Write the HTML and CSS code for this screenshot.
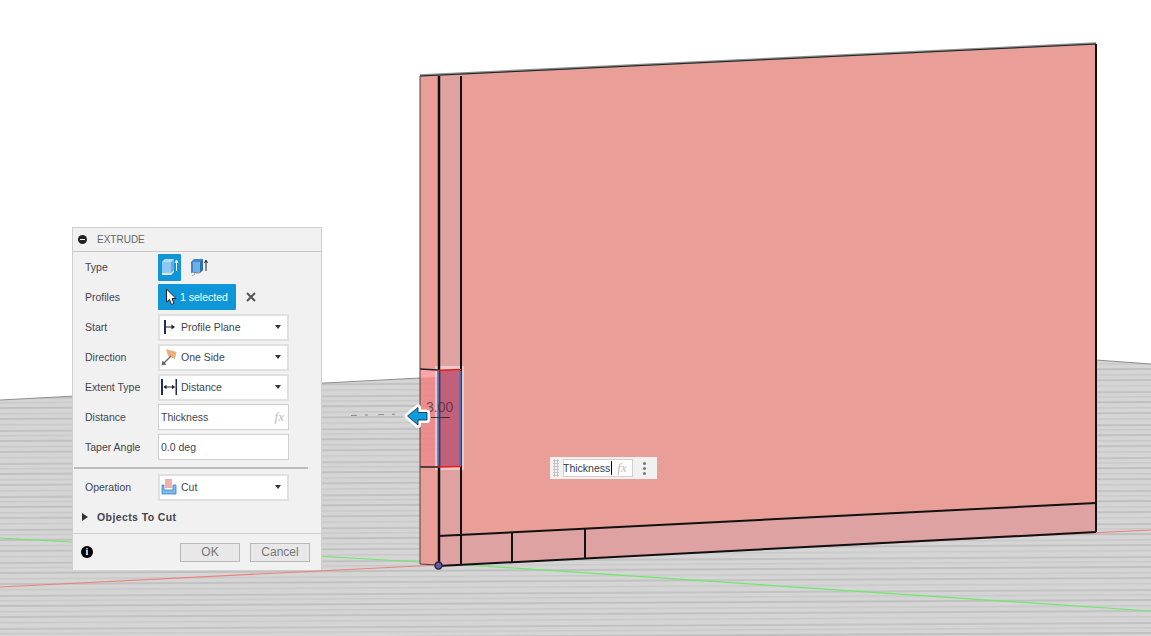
FILE: index.html
```html
<!DOCTYPE html>
<html lang="en">
<head>
<meta charset="utf-8">
<title>Extrude</title>
<link rel="stylesheet" href="styles.css">
</head>
<body>
<main class="stage">
  <svg class="scene" width="1151" height="636" viewBox="0 0 1151 636">
    <defs>
      <pattern id="stripes" width="600" height="33" patternUnits="userSpaceOnUse" patternTransform="rotate(-0.3)">
        <rect width="600" height="33" fill="#d5d5d5"/>
        <rect y="1" width="600" height="2" fill="#c3c3c3"/>
        <rect y="6" width="600" height="1.500" fill="#c9c9c9"/>
        <rect y="11" width="600" height="2" fill="#c0c0c0"/>
        <rect y="17" width="600" height="1.500" fill="#c8c8c8"/>
        <rect y="22" width="600" height="2" fill="#c2c2c2"/>
        <rect y="28" width="600" height="1.500" fill="#c9c9c9"/>
      </pattern>
      <filter id="soft" x="-1%" y="-1%" width="102%" height="102%">
        <feGaussianBlur stdDeviation="0.6"/>
      </filter>
    </defs>
    <polygon points="0,400 420,378 760,352 1096,360 1151,364 1151,640 -5,640 -5,400" fill="url(#stripes)" filter="url(#soft)"/>
    <polyline points="0,400 420,378" class="horizon"/>
    <polyline points="1096,360 1151,364" class="horizon"/>
    <polyline points="0,538 438,563 1151,611" class="axis-green"/>
    <polyline points="0,587 438,565 1151,530" class="axis-red"/>

    <polygon points="420,76 1096,44 1096,532 438,566 420,564" fill="#e99f98"/>
    <polygon points="439,77 461,76 461,564 439,566" fill="#dfa2a1"/>
    <polygon points="438,536 1096,503 1096,532 438,566" fill="#dea2a3"/>

    <polygon points="420,369 438,369 438,467 420,467" fill="#f08484"/>
    <polygon points="420,378 438,377 438,467 420,467" fill="url(#stripes)" opacity="0.12"/>
    <polygon points="420,369 438,369 438,377 420,378" fill="#fba6a6"/>
    <rect x="436.500" y="367.500" width="26" height="101" class="halo"/>
    <rect x="439" y="370" width="22" height="97" fill="#c0607a"/>
    <line x1="420" y1="369" x2="438" y2="370" class="edge-thin"/>
    <line x1="420" y1="467" x2="438" y2="467" class="edge-thin"/>

    <polyline points="420,76 1096,44" class="top-shade"/>
    <polyline points="420,76 1096,44" class="edge-top"/>
    <line x1="420" y1="76" x2="420" y2="564" class="edge-side"/>
    <line x1="420" y1="564" x2="438" y2="565" class="edge-side"/>
    <line x1="439" y1="76" x2="439" y2="566" class="edge-bold"/>
    <line x1="461" y1="76" x2="461" y2="564" class="edge"/>
    <line x1="1096" y1="44" x2="1096" y2="532" class="edge"/>
    <line x1="438" y1="536" x2="1096" y2="503" class="edge"/>
    <line x1="438" y1="566" x2="1096" y2="532" class="edge"/>
    <line x1="512" y1="532" x2="512" y2="562" class="edge"/>
    <line x1="585" y1="529" x2="585" y2="558" class="edge"/>

    <line x1="438.500" y1="371" x2="438.500" y2="466" class="sel-blue"/>
    <line x1="460.500" y1="371" x2="460.500" y2="466" class="sel-blue"/>
    <line x1="437" y1="370.500" x2="461" y2="369.500" class="sel-red"/>
    <line x1="438" y1="467" x2="461" y2="466.500" class="sel-red"/>

    <text x="426" y="412" class="dim-text">3.00</text>
    <line x1="431" y1="417.500" x2="450" y2="417.500" class="dim-line"/>
    <line x1="351" y1="415.500" x2="404" y2="414" class="dim-dash"/>

    <g>
      <path d="M407.500 416 L418 407.500 L418 412.500 L427 412.500 L427 420 L418 420 L418 425 Z" class="arrow-halo"/>
      <path d="M407.500 416 L418 407.500 L418 412.500 L427 412.500 L427 420 L418 420 L418 425 Z" class="arrow"/>
    </g>

    <circle cx="438.500" cy="565.500" r="3.500" class="origin"/>
  </svg>

  <section class="dialog">
    <header class="dialog-head">
      <span class="collapse"></span>
      <span class="dialog-title">EXTRUDE</span>
    </header>
    <div class="rows">
      <div class="row">
        <span class="label">Type</span>
        <div class="types">
          <span class="type-btn active">
            <svg width="20" height="20" viewBox="0 0 20 20">
              <path d="M2 5 L5 2 L14 2 L14 13 L11 16 L2 16 Z" fill="#8cc8f5"/>
              <path d="M11 5 L14 2 L14 13 L11 16 Z" fill="#6aa9dd"/>
              <path d="M2 5 L5 2 L14 2 L11 5 Z" fill="#b4defa"/>
              <path d="M2 16 L11 16 L14 13 L14 15 L11 18 L2 18 Z" fill="#e6e6e6"/>
              <path d="M16.500 14 L16.500 4 M15 6 L16.500 3 L18 6" stroke="#fff" stroke-width="1" fill="none"/>
            </svg>
          </span>
          <span class="type-btn">
            <svg width="20" height="20" viewBox="0 0 20 20">
              <path d="M2 5 L5 2 L14 2 L14 13 L11 16 L2 16 Z" fill="#3f86c9"/>
              <path d="M4 5 L11 5 L11 15 L4 15 Z" fill="#6fb0e6"/>
              <path d="M11 5 L14 2 L14 13 L11 16 Z" fill="#2f6fae"/>
              <path d="M2 16 Q5 14 6 17 L3 19 M7 16 L11 16 L13 14" stroke="#aaa" fill="none"/>
              <path d="M17 14 L17 4 M15.500 6 L17 3 L18.500 6" stroke="#222" stroke-width="1" fill="none"/>
            </svg>
          </span>
        </div>
      </div>
      <div class="row">
        <span class="label">Profiles</span>
        <span class="selected-btn">
          <svg width="12" height="18" viewBox="0 0 12 18">
            <path d="M1.500 1 L1.500 14 L4.500 11.500 L6.500 16.500 L9 15.500 L7 10.500 L11 10.500 Z" fill="#fff" stroke="#222" stroke-width="1"/>
          </svg>
          <span>1 selected</span>
        </span>
        <svg class="clear" width="10" height="10" viewBox="0 0 10 10">
          <path d="M1 1 L9 9 M9 1 L1 9" stroke="#555" stroke-width="2"/>
        </svg>
      </div>
      <div class="row">
        <span class="label">Start</span>
        <div class="select">
          <svg class="opt-icon" width="16" height="16" viewBox="0 0 16 16">
            <path d="M4 1 L4 15" stroke="#152f60" stroke-width="2"/>
            <path d="M4 8 L13 8" stroke="#222" stroke-width="1"/>
            <path d="M10.500 5.500 L14 8 L10.500 10.500 Z" fill="#222"/>
          </svg>
          <span class="opt-text">Profile Plane</span>
          <span class="caret"></span>
        </div>
      </div>
      <div class="row">
        <span class="label">Direction</span>
        <div class="select">
          <svg class="opt-icon" width="16" height="18" viewBox="0 0 16 18">
            <path d="M5 1 L15.500 4 L14 11 L7 8 Z" fill="#f0ad7c"/>
            <path d="M10 8 L2 16" stroke="#666" stroke-width="1.300"/>
            <path d="M0.500 17.500 L1.500 12.500 L5.500 16.500 Z" fill="#666"/>
          </svg>
          <span class="opt-text">One Side</span>
          <span class="caret"></span>
        </div>
      </div>
      <div class="row">
        <span class="label">Extent Type</span>
        <div class="select">
          <svg class="opt-icon" width="16" height="16" viewBox="0 0 16 16">
            <path d="M1 0 L1 16 M15.500 0 L15.500 16" stroke="#152f60" stroke-width="2"/>
            <path d="M3 8 L13.500 8" stroke="#222" stroke-width="1"/>
            <path d="M2.500 8 L5.500 5.800 L5.500 10.200 Z M14 8 L11 5.800 L11 10.200 Z" fill="#222"/>
          </svg>
          <span class="opt-text">Distance</span>
          <span class="caret"></span>
        </div>
      </div>
      <div class="row">
        <span class="label">Distance</span>
        <div class="field">
          <span>Thickness</span>
          <em class="fx">fx</em>
        </div>
      </div>
      <div class="row">
        <span class="label">Taper Angle</span>
        <div class="field">
          <span>0.0 deg</span>
        </div>
      </div>
    </div>
    <hr class="rule">
    <div class="row">
      <span class="label">Operation</span>
      <div class="select">
        <svg class="opt-icon" width="16" height="16" viewBox="0 0 16 16">
          <rect x="4" y="0" width="7" height="9" fill="#eeb1ae"/>
          <path d="M1 6 L1 15 L15 15 L15 6 L12 6 L12 11 L3 11 L3 6 Z" fill="#7fb9e8" stroke="#3d83c4" stroke-width="0.800"/>
        </svg>
        <span class="opt-text">Cut</span>
        <span class="caret"></span>
      </div>
    </div>
    <div class="group">
      <span class="expand"></span>
      <span class="group-title">Objects To Cut</span>
    </div>
    <footer class="dialog-foot">
      <span class="info">i</span>
      <span class="btn">OK</span>
      <span class="btn">Cancel</span>
    </footer>
  </section>

  <div class="inline-input">
    <span class="grip"></span>
    <div class="inline-field">
      <span class="inline-text">Thickness</span>
      <span class="text-caret"></span>
      <em class="fx">fx</em>
    </div>
    <span class="kebab"><i></i><i></i><i></i></span>
  </div>
</main>
</body>
</html>
```
FILE: styles.css
```css
* {
  box-sizing: border-box;
}

html,
body {
  margin: 0;
  background: #fff;
}

.stage {
  position: relative;
  width: 1151px;
  height: 636px;
  overflow: hidden;
  font: 10.5px/14px "Liberation Sans", Arial, sans-serif;
  color: #40454f;
}

.scene {
  position: absolute;
  inset: 0;
  display: block;
}

.horizon { fill: none; stroke: #8f8f8f; stroke-width: 1; }
.axis-green { fill: none; stroke: #6fe86f; stroke-width: 1.2; }
.axis-red { fill: none; stroke: #ee8080; stroke-width: 1.2; }
.halo { fill: none; stroke: #eee; stroke-opacity: 0.55; stroke-width: 3; }
.edge { stroke: #111; stroke-width: 2; }
.edge-bold { stroke: #111; stroke-width: 2.5; }
.edge-thin { stroke: #222; stroke-width: 1.5; }
.edge-side { stroke: #444; stroke-width: 1; }
.edge-top { stroke: #222; stroke-width: 1; fill: none; }
.top-shade { stroke: #8b8b8b; stroke-width: 2.5; fill: none; transform: translateY(-0.5px); }
.sel-blue { stroke: #3d72c8; stroke-width: 2; }
.sel-red { stroke: #ee1c1c; stroke-width: 1.6; }
.dim-text { font: 14px "Liberation Sans", Arial, sans-serif; fill: #4a2a38; fill-opacity: 0.75; }
.dim-line { stroke: #332028; stroke-width: 1; stroke-opacity: 0.85; }
.dim-dash { stroke: #8a8a8a; stroke-width: 1; stroke-dasharray: 6 8 3 10; }
.arrow-halo { fill: #fff; stroke: #fff; stroke-width: 6; stroke-linejoin: round; }
.arrow { fill: #0e9ddc; stroke: #0b2231; stroke-width: 0.8; stroke-linejoin: round; }
.origin { fill: #6b57ad; stroke: #2b2a3a; stroke-width: 1.5; }

.dialog {
  position: absolute;
  left: 72px;
  top: 227px;
  width: 250px;
  height: 343px;
  display: flex;
  flex-direction: column;
  background: #f1f1f1;
  border: 1px solid #cfcfcf;
  border-bottom: 0;
}

.dialog-head {
  height: 24px;
  flex: none;
  display: flex;
  align-items: center;
  gap: 10px;
  padding-left: 5px;
  border-bottom: 1px solid #c9c9c9;
}

.collapse {
  position: relative;
  width: 9px;
  height: 9px;
  border-radius: 50%;
  background: #222;
}

.collapse::after {
  content: "";
  position: absolute;
  left: 2px;
  right: 2px;
  top: 4px;
  height: 1px;
  background: #f1f1f1;
}

.dialog-title {
  font-size: 10px;
  color: #666;
}

.rows {
  display: flex;
  flex-direction: column;
}

.row {
  height: 30px;
  flex: none;
  display: flex;
  align-items: center;
  padding-left: 12px;
}

.label {
  width: 73px;
  flex: none;
}

.types {
  display: flex;
  gap: 6px;
}

.type-btn {
  width: 23px;
  height: 27px;
  display: flex;
  align-items: center;
  justify-content: center;
  border-radius: 1px;
}

.type-btn.active {
  background: #0f96d9;
}

.selected-btn {
  width: 78px;
  height: 26px;
  display: flex;
  align-items: center;
  gap: 3px;
  padding-left: 7px;
  background: #0f96d9;
  color: #fff;
  border-radius: 1px;
}

.clear {
  margin-left: 10px;
}

.select {
  width: 131px;
  height: 27px;
  display: flex;
  align-items: center;
  background: #fff;
  border: 2px solid #e0e0e0;
  border-radius: 1px;
}

.opt-icon {
  flex: none;
  margin: 0 4px 0 1px;
}

.opt-text {
  flex: 1;
}

.caret {
  width: 0;
  height: 0;
  margin-right: 6px;
  border-style: solid;
  border-width: 4px 3px 0;
  border-color: #333 transparent transparent;
}

.field {
  width: 131px;
  height: 26px;
  display: flex;
  align-items: center;
  justify-content: space-between;
  padding: 0 4px 0 2px;
  background: #fff;
  border: 1px solid #d0d0d0;
}

.fx {
  font: italic 13px "Liberation Serif", serif;
  color: #bcbcbc;
}

.rule {
  width: 234px;
  height: 2px;
  flex: none;
  margin: 5px 0 3px 1px;
  border: 0;
  background: #bdbdbd;
}

.group {
  height: 30px;
  flex: none;
  display: flex;
  align-items: center;
  padding-left: 9px;
}

.expand {
  width: 0;
  height: 0;
  margin-right: 9px;
  border-style: solid;
  border-width: 4px 0 4px 6px;
  border-color: transparent transparent transparent #333;
}

.group-title {
  font-weight: 700;
  letter-spacing: 0.4px;
}

.dialog-foot {
  flex: 1;
  display: flex;
  align-items: center;
  margin-top: 1px;
  padding: 0 11px 0 8px;
  gap: 10px;
  border-top: 1px solid #cfcfcf;
}

.info {
  width: 12px;
  height: 12px;
  margin-right: auto;
  border-radius: 50%;
  background: #000;
  color: #fff;
  font: 700 10px/12px "Liberation Serif", serif;
  text-align: center;
}

.btn {
  width: 60px;
  height: 19px;
  display: flex;
  align-items: center;
  justify-content: center;
  font-size: 12px;
  color: #777;
  background: #e8e8e8;
  border: 1px solid #b9b9b9;
}

.inline-input {
  position: absolute;
  left: 550px;
  top: 457px;
  width: 107px;
  height: 22px;
  display: flex;
  align-items: center;
  background: #f1f1f1;
}

.grip {
  width: 6px;
  height: 18px;
  margin: 0 4px 0 3px;
  flex: none;
  background-image: radial-gradient(circle, #c4c4c4 1px, transparent 1.2px);
  background-size: 3px 3px;
}

.inline-field {
  width: 70px;
  height: 18px;
  display: flex;
  align-items: center;
  background: #fff;
  border: 1px solid #cfcfcf;
}

.inline-text {
  margin-left: -1px;
  color: #2e3c4e;
}

.text-caret {
  width: 1px;
  height: 14px;
  flex: none;
  margin-left: 1px;
  background: #000;
}

.inline-field .fx {
  margin-left: 5px;
}

.kebab {
  flex: none;
  display: flex;
  flex-direction: column;
  gap: 2px;
  margin-left: 10px;
}

.kebab i {
  width: 3px;
  height: 3px;
  border-radius: 50%;
  background: #777;
}
```
